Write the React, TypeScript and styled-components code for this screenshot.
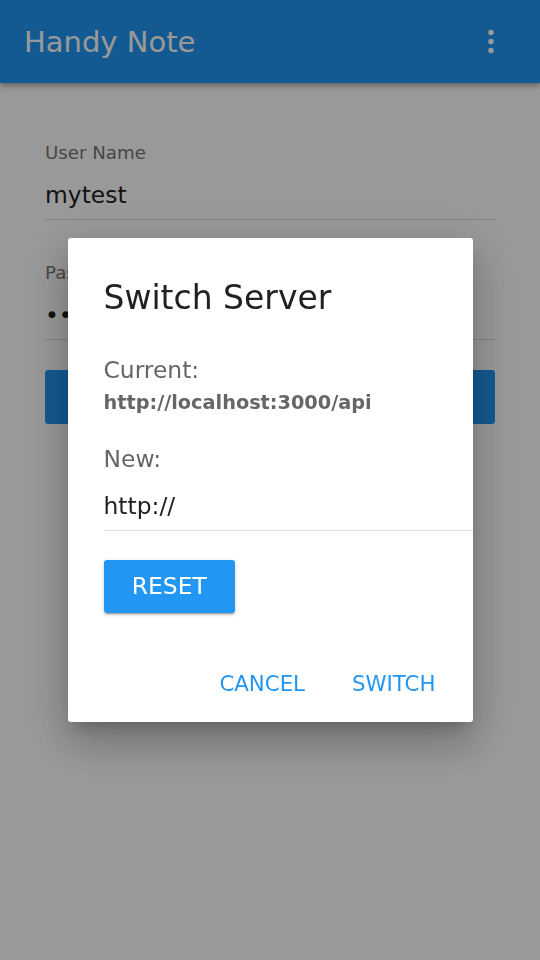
import React from 'react'
import styled, { createGlobalStyle } from 'styled-components'

const GlobalStyle = createGlobalStyle`
  html,
  body {
    margin: 0;
    padding: 0;
    background: #ffffff;
    font-family: 'DejaVu Sans', 'Liberation Sans', sans-serif;
  }
`

const Page = styled('div')`
  width: 540px;
  min-height: 960px;
  background: #ffffff;
`

const AppBar = styled('header')`
  display: flex;
  align-items: center;
  justify-content: space-between;
  height: 83px;
  padding: 1px 44px 0 24px;
  box-sizing: border-box;
  background: #2196f3;
  box-shadow: 0 2px 4px -1px rgba(0, 0, 0, 0.2), 0 4px 5px 0 rgba(0, 0, 0, 0.14),
    0 1px 10px 0 rgba(0, 0, 0, 0.12);
`

const AppTitle = styled('h1')`
  margin: 0;
  font-size: 29px;
  font-weight: 400;
  line-height: 40px;
  color: #ffffff;
`

const MenuButton = styled('button')`
  display: flex;
  padding: 0;
  border: 0;
  background: none;
`

const Form = styled('form')`
  padding: 57.5px 45px 0;
`

const Field = styled('div')`
  margin-bottom: 41px;

  & + & {
    margin-bottom: 30px;
  }
`

const Label = styled('label')`
  display: block;
  font-size: 18.2px;
  line-height: 24px;
  color: #777777;
`

const TextInput = styled('input')`
  display: block;
  width: 100%;
  box-sizing: border-box;
  margin: 0;
  padding: 14px 0 8px;
  border: 0;
  border-bottom: 1px solid #dcdcdc;
  outline: none;
  background: transparent;
  font-family: inherit;
  font-size: 23.4px;
  line-height: 32px;
  height: 55px;
  color: #222222;
`

// the label sits under the dialog, so the button is drawn without it
const LoginButton = styled('button')`
  display: block;
  width: 100%;
  height: 54px;
  border: 0;
  border-radius: 3px;
  background: #2196f3;
`

const Overlay = styled('div')`
  position: fixed;
  inset: 0;
  display: flex;
  align-items: center;
  justify-content: center;
  background: rgba(0, 0, 0, 0.4);
`

const Dialog = styled('div')`
  width: 405px;
  box-sizing: border-box;
  padding: 40px 37px 18.2px 36px;
  overflow: hidden;
  border-radius: 3px;
  background: #ffffff;
  box-shadow: 0 11px 15px -7px rgba(0, 0, 0, 0.2), 0 24px 38px 3px rgba(0, 0, 0, 0.14),
    0 9px 46px 8px rgba(0, 0, 0, 0.12);
`

const DialogTitle = styled('h2')`
  margin: 0 0 36.7px;
  font-size: 33px;
  font-weight: 400;
  line-height: 40px;
  color: #212121;
`

const Caption = styled('div')<{ gap: number }>`
  margin-top: ${({ gap }) => gap}px;
  font-size: 23.4px;
  line-height: 30px;
  color: #666666;
`

const CurrentUrl = styled('div')`
  margin-top: 5.5px;
  font-size: 19.3px;
  font-weight: 700;
  line-height: 26px;
  color: #666666;
`

const UrlInput = styled(TextInput)`
  width: calc(100% + 37px);
  height: auto;
  margin-top: 16.5px;
  padding: 0 0 8px;
  color: #212121;
`

const ResetButton = styled('button')`
  display: block;
  margin: 29px 0 0;
  width: 131.6px;
  height: 53.3px;
  padding: 0;
  border: 0;
  border-radius: 3px;
  background: #2196f3;
  color: #ffffff;
  font-family: inherit;
  font-size: 23.4px;
  line-height: 53.3px;
  box-shadow: 0 3px 1px -2px rgba(0, 0, 0, 0.2), 0 2px 2px 0 rgba(0, 0, 0, 0.14),
    0 1px 5px 0 rgba(0, 0, 0, 0.12);
`

const Actions = styled('div')`
  display: flex;
  justify-content: flex-end;
  gap: 47px;
  margin-top: 50.5px;
`

const TextButton = styled('button')`
  padding: 0;
  border: 0;
  background: none;
  font-family: inherit;
  font-size: 21.3px;
  line-height: 40px;
  color: #2196f3;
`

const MoreIcon = () => (
  <svg width="10" height="30" viewBox="0 0 10 30">
    <circle cx="5" cy="5.5" r="2.7" fill="#ffffff" />
    <circle cx="5" cy="14.5" r="2.7" fill="#ffffff" />
    <circle cx="5" cy="23.5" r="2.7" fill="#ffffff" />
  </svg>
)

export default function App() {
  return (
    <Page>
      <GlobalStyle />
      <AppBar>
        <AppTitle>Handy Note</AppTitle>
        <MenuButton aria-label="more">
          <MoreIcon />
        </MenuButton>
      </AppBar>
      <Form>
        <Field>
          <Label>User Name</Label>
          <TextInput value="mytest" readOnly />
        </Field>
        <Field>
          <Label>Password</Label>
          <TextInput type="password" value="mytest" readOnly />
        </Field>
        <LoginButton type="button" aria-label="login" />
      </Form>
      <Overlay>
        <Dialog>
          <DialogTitle>Switch Server</DialogTitle>
          <Caption gap={0}>Current:</Caption>
          <CurrentUrl>http://localhost:3000/api</CurrentUrl>
          <Caption gap={27.3}>New:</Caption>
          <UrlInput value="http://" readOnly />
          <ResetButton type="button">RESET</ResetButton>
          <Actions>
            <TextButton type="button">CANCEL</TextButton>
            <TextButton type="button">SWITCH</TextButton>
          </Actions>
        </Dialog>
      </Overlay>
    </Page>
  )
}
